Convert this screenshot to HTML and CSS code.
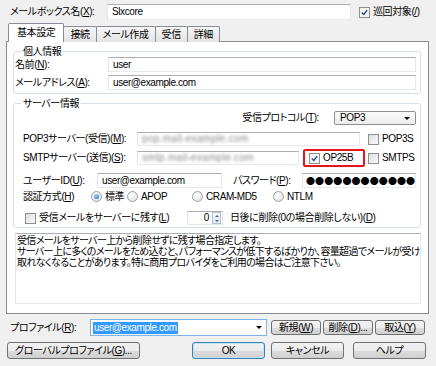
FILE: index.html
```html
<!DOCTYPE html>
<html lang="ja">

<head>
    <meta charset="UTF-8" />
    <title>メールボックスの設定</title>
    <link rel="stylesheet" href="styles.css">
</head>

<body>
    <div class="dialog">
        <div class="row top-row">
            <label class="lbl lbl-box">メールボックス名(<u>X</u>):</label>
            <div class="edit edit-box">Slxcore</div>
            <span class="check on"><svg viewBox="0 0 11 11"><path d="M2.2 5.6 L4.6 8 L8.8 2.6" /></svg></span>
            <span class="check-text">巡回対象(<u>/</u>)</span>
        </div>

        <div class="tabs">
            <span class="tab active">基本設定</span>
            <span class="tab">接続</span>
            <span class="tab">メール作成</span>
            <span class="tab">受信</span>
            <span class="tab">詳細</span>
        </div>

        <div class="panel">
            <fieldset class="group">
                <legend>個人情報</legend>
                <div class="row field">
                    <label class="lbl lbl-personal">名前(<u>N</u>):</label>
                    <div class="edit grow">user</div>
                </div>
                <div class="row field gap3">
                    <label class="lbl lbl-personal">メールアドレス(<u>A</u>):</label>
                    <div class="edit grow">user@example.com</div>
                </div>
            </fieldset>

            <fieldset class="group server">
                <legend>サーバー情報</legend>
                <div class="row proto-row">
                    <label class="lbl">受信プロトコル(<u>T</u>):</label>
                    <div class="select">POP3<span class="arrow"></span></div>
                </div>
                <div class="row srv-row pop-row">
                    <label class="lbl lbl-server">POP3サーバー(受信)(<u>M</u>):</label>
                    <div class="edit edit-pop"><span class="blur">pop.mail-example.com</span></div>
                    <span class="check ssl"></span>
                    <span class="check-text">POP3S</span>
                </div>
                <div class="row srv-row smtp-row">
                    <label class="lbl lbl-server">SMTPサーバー(送信)(<u>S</u>):</label>
                    <div class="edit edit-smtp"><span class="blur">smtp.mail-example.com</span></div>
                    <div class="mark">
                        <span class="check on"><svg viewBox="0 0 11 11"><path d="M2.2 5.6 L4.6 8 L8.8 2.6" /></svg></span>
                        <span class="check-text">OP25B</span>
                    </div>
                    <span class="check ssl-s"></span>
                    <span class="check-text">SMTPS</span>
                </div>
                <div class="row field user-row">
                    <label class="lbl lbl-user">ユーザーID(<u>U</u>):</label>
                    <div class="edit edit-user">user@example.com</div>
                    <label class="lbl lbl-pass">パスワード(<u>P</u>):</label>
                    <div class="edit grow dots">●●●●●●●●●●●●</div>
                </div>
                <div class="row auth-row">
                    <label class="lbl lbl-auth">認証方式(<u>H</u>)</label>
                    <span class="opt opt-1"><span class="radio on"></span>標準</span>
                    <span class="opt opt-2"><span class="radio"></span>APOP</span>
                    <span class="opt opt-3"><span class="radio"></span>CRAM-MD5</span>
                    <span class="opt"><span class="radio"></span>NTLM</span>
                </div>
                <div class="row keep-row">
                    <span class="check keep"></span>
                    <span class="check-text keep-text">受信メールをサーバーに残す(<u>L</u>)</span>
                    <div class="edit spin">0<span class="spin-btn"><i class="up"></i><i class="down"></i></span></div>
                    <span class="after">日後に削除(0の場合削除しない)(<u>D</u>)</span>
                </div>
            </fieldset>

            <div class="desc">
                受信メールをサーバー上から削除せずに残す場合指定します。<br>
                サーバー上に多くのメールをため込むと、パフォーマンスが低下するばかりか、容量超過でメールが受け<br>
                取れなくなることがあります。特に商用プロバイダをご利用の場合はご注意下さい。
            </div>
        </div>

        <div class="row profile-row">
            <label class="lbl lbl-profile">プロファイル(<u>R</u>):</label>
            <div class="combo"><span class="selected">user@example.com</span><span class="arrow"></span></div>
            <button class="btn small">新規(<u>W</u>)</button>
            <button class="btn small">削除(<u>D</u>)...</button>
            <button class="btn small">取込(<u>Y</u>)</button>
        </div>

        <div class="row footer">
            <button class="btn global">グローバルプロファイル(<u>G</u>)...</button>
            <button class="btn wide default">OK</button>
            <button class="btn wide cancel">キャンセル</button>
            <button class="btn wide help">ヘルプ</button>
        </div>
    </div>
</body>

</html>
```

FILE: styles.css
```css
* {
    box-sizing: border-box;
}

body {
    margin: 0;
    background: #f0f0f0;
    color: #000;
    font-family: "Liberation Sans", "Noto Sans CJK JP", sans-serif;
    font-size: 10px;
    line-height: 12px;
    letter-spacing: -0.4px;
    font-feature-settings: "palt";
}

u {
    text-decoration: underline;
    text-underline-offset: 1px;
}

.dialog {
    width: 436px;
    height: 366px;
    overflow: hidden;
}

.row {
    display: flex;
    align-items: center;
}

.lbl {
    flex: none;
    white-space: nowrap;
}

/* text boxes */
.edit {
    display: flex;
    align-items: center;
    height: 15px;
    padding: 0 4px;
    background: #fff;
    border: 1px solid;
    border-color: #abadb3 #e3e9ef #e3e9ef #e2e3ea;
    white-space: nowrap;
    overflow: hidden;
}

.grow {
    flex: 1;
}

.blur {
    color: #888;
    filter: blur(1.4px);
    letter-spacing: 0.3px;
}

/* checkbox / radio */
.check {
    flex: none;
    width: 11px;
    height: 11px;
    border: 1px solid #8e8f8f;
    background: linear-gradient(135deg, #dedede, #fafafa);
}

.check svg {
    display: block;
    width: 9px;
    height: 9px;
    fill: none;
    stroke: #24498f;
    stroke-width: 1.7;
}

.check.on {
    background: #f4f4f4;
}

.check-text {
    margin-left: 3px;
    white-space: nowrap;
}

.radio {
    display: inline-block;
    position: relative;
    width: 11px;
    height: 11px;
    margin-right: 3px;
    border: 1px solid #a2a2a2;
    border-radius: 50%;
    background: radial-gradient(circle at 40% 35%, #fff, #dcdcdc);
    vertical-align: -2px;
}

.radio.on::after {
    content: "";
    position: absolute;
    left: 2px;
    top: 2px;
    width: 5px;
    height: 5px;
    border-radius: 50%;
    background: radial-gradient(circle at 40% 35%, #9fd2ff, #1c5fb4);
}

/* top row */
.top-row {
    margin-top: 4px;
    height: 16px;
    padding-left: 10px;
}

.lbl-box {
    width: 97px;
}

.edit-box {
    width: 244px;
    height: 16px;
}

.top-row .check {
    margin-left: 8px;
}

/* tabs */
.tabs {
    display: flex;
    align-items: flex-end;
    height: 18px;
    margin-top: 4px;
    padding-left: 8px;
    position: relative;
    z-index: 1;
    margin-bottom: -1px;
}

.tab {
    height: 16px;
    padding: 0 6px;
    margin-left: -1px;
    line-height: 15px;
    border: 1px solid #898c95;
    border-bottom: none;
    border-radius: 2px 2px 0 0;
    background: linear-gradient(#f6f6f6, #e4e4e4);
    white-space: nowrap;
}

.tab.active {
    height: 19px;
    margin-left: 0;
    padding: 0 8px;
    line-height: 17px;
    background: #fff;
}

.panel {
    width: 423px;
    height: 273px;
    margin-left: 6px;
    padding: 4px 7px 0 6px;
    background: #fff;
    border: 1px solid #898c95;
}

/* group boxes */
.group {
    margin: 0;
    padding: 0 4px 3px 1px;
    min-width: 0;
    border: 1px solid #d5dfe5;
    border-radius: 3px;
}

.group legend {
    margin-left: 6px;
    padding: 0 2px;
    line-height: 11px;
}

.field {
    height: 15px;
}

.gap3 {
    margin-top: 3px;
}

.lbl-personal {
    width: 93px;
}

.server {
    margin-top: 4px;
    padding-bottom: 2px;
}

.proto-row {
    height: 14px;
    margin-top: 2px;
    justify-content: flex-end;
}

.proto-row .lbl {
    margin-right: 15px;
}

.select {
    position: relative;
    width: 82px;
    height: 14px;
    padding-left: 5px;
    line-height: 12px;
    border: 1px solid #8e8f8f;
    border-radius: 2px;
    background: linear-gradient(#fbfbfb, #ececec);
}

.arrow {
    position: absolute;
    right: 5px;
    top: 5px;
    border: 3px solid transparent;
    border-top: 3px solid #000;
    border-bottom: none;
}

.srv-row {
    height: 14px;
}

.pop-row {
    margin-top: 7px;
}

.smtp-row {
    margin-top: 5px;
}

.lbl-server {
    width: 122px;
    padding-left: 8px;
}

.edit-pop {
    width: 223px;
    height: 14px;
}

.edit-smtp {
    width: 162px;
    height: 14px;
}

.pop-row .check,
.ssl-s {
    margin-left: 8px;
}

.mark {
    display: flex;
    align-items: center;
    width: 62px;
    height: 18px;
    margin: -2px 0 -2px 4px;
    padding-left: 4px;
    border: 2px solid #e8141c;
    border-radius: 2px;
}

.mark + .ssl-s {
    margin-left: 3px;
}

.user-row {
    margin-top: 8px;
}

.lbl-user {
    width: 82px;
    padding-left: 8px;
}

.edit-user {
    width: 125px;
}

.lbl-pass {
    width: 80px;
    padding-left: 11px;
}

.dots {
    font-family: "Noto Sans CJK JP", sans-serif;
    font-size: 9px;
    letter-spacing: 0.1px;
    padding-left: 3px;
}

.auth-row {
    height: 14px;
    margin-top: 2px;
}

.lbl-auth {
    width: 76px;
    padding-left: 8px;
}

.opt {
    white-space: nowrap;
}

.opt-1 {
    width: 36px;
}

.opt-2 {
    width: 65px;
}

.opt-3 {
    width: 81px;
}

.keep-row {
    height: 14px;
    margin-top: 7px;
}

.keep {
    margin-left: 10px;
}

.keep-text {
    width: 148px;
}

.spin {
    width: 36px;
    height: 14px;
    justify-content: flex-end;
    padding: 0 1px 0 0;
}

.spin-btn {
    display: flex;
    flex-direction: column;
    justify-content: space-around;
    align-items: center;
    width: 9px;
    height: 12px;
    margin-left: 3px;
    border: 1px solid #b6c2d2;
    background: linear-gradient(#f4f8fc, #dfe8f2);
}

.spin-btn i {
    border: 2px solid transparent;
    border-left-width: 2.5px;
    border-right-width: 2.5px;
}

.spin-btn .up {
    border-top: none;
    border-bottom-color: #4d6a8a;
}

.spin-btn .down {
    border-bottom: none;
    border-top-color: #4d6a8a;
}

.after {
    margin-left: 7px;
    white-space: nowrap;
}

/* description */
.desc {
    height: 71px;
    margin: 5px 0 0 2px;
    padding: 1px 0 0 1px;
    line-height: 11px;
    letter-spacing: -0.65px;
    white-space: nowrap;
    overflow: hidden;
    background: #fff;
    border: 1px solid;
    border-color: #abadb3 #e3e9ef #e3e9ef #e2e3ea;
}

/* bottom area */
.profile-row {
    height: 17px;
    margin-top: 5px;
    padding-left: 10px;
}

.lbl-profile {
    width: 80px;
}

.combo {
    position: relative;
    width: 177px;
    height: 17px;
    padding-left: 2px;
    display: flex;
    align-items: center;
    background: #fff;
    border: 1px solid #7eb4ea;
}

.combo .arrow {
    right: 4px;
    top: 6px;
}

.selected {
    padding: 0 1px;
    line-height: 12px;
    color: #fff;
    background: #3399ff;
}

.btn {
    height: 15px;
    padding: 0;
    font: inherit;
    letter-spacing: inherit;
    line-height: 13px;
    color: #000;
    border: 1px solid #707070;
    border-radius: 3px;
    background: linear-gradient(#f2f2f2 0%, #ebebeb 50%, #dddddd 51%, #cfcfcf 100%);
    white-space: nowrap;
}

.small {
    width: 50px;
    margin-left: 2px;
}

.profile-row .combo + .small {
    margin-left: 4px;
}

.footer {
    height: 17px;
    margin-top: 6px;
    padding-left: 7px;
}

.footer .btn {
    height: 17px;
}

.global {
    width: 133px;
}

.wide {
    width: 73px;
}

.default {
    margin-left: 52px;
    border-color: #3c7fb1;
    box-shadow: inset 0 0 0 1px #bfe4f9;
}

.cancel {
    margin-left: 6px;
}

.help {
    margin-left: 9px;
}
```
